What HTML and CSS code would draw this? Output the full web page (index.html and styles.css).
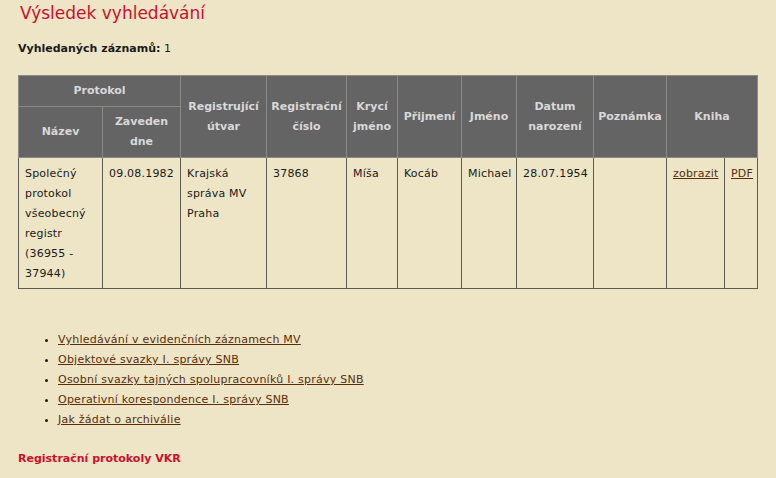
FILE: index.html
```html
<!DOCTYPE html>
<html lang="cs">
<head>
<meta charset="utf-8">
<title>Výsledek vyhledávání</title>
<link rel="stylesheet" href="styles.css">
</head>
<body>
<h1 class="title">Výsledek vyhledávání</h1>
<p class="count"><b>Vyhledaných záznamů:</b> 1</p>
<table class="results">
<colgroup>
<col style="width:84px"><col style="width:78px"><col style="width:86px"><col style="width:80px"><col style="width:51px"><col style="width:64px"><col style="width:55px"><col style="width:77px"><col style="width:73px"><col style="width:58px"><col style="width:33px">
</colgroup>
<thead>
<tr class="h1row">
<th colspan="2">Protokol</th>
<th rowspan="2">Registrující útvar</th>
<th rowspan="2">Registrační číslo</th>
<th rowspan="2">Krycí jméno</th>
<th rowspan="2">Přijmení</th>
<th rowspan="2">Jméno</th>
<th rowspan="2">Datum narození</th>
<th rowspan="2">Poznámka</th>
<th rowspan="2" colspan="2">Kniha</th>
</tr>
<tr class="h2row">
<th>Název</th>
<th>Zaveden dne</th>
</tr>
</thead>
<tbody>
<tr>
<td>Společný protokol všeobecný registr (36955 - 37944)</td>
<td>09.08.1982</td>
<td>Krajská správa MV Praha</td>
<td>37868</td>
<td>Míša</td>
<td>Kocáb</td>
<td>Michael</td>
<td>28.07.1954</td>
<td></td>
<td><a href="#">zobrazit</a></td>
<td><a href="#">PDF</a></td>
</tr>
</tbody>
</table>
<ul class="links">
<li><a href="#">Vyhledávání v evidenčních záznamech MV</a></li>
<li><a href="#">Objektové svazky I. správy SNB</a></li>
<li><a href="#">Osobní svazky tajných spolupracovníků I. správy SNB</a></li>
<li><a href="#">Operativní korespondence I. správy SNB</a></li>
<li><a href="#">Jak žádat o archiválie</a></li>
</ul>
<p class="vkr">Registrační protokoly VKR</p>
</body>
</html>
```

FILE: styles.css
```css
html, body {
  margin: 0;
  padding: 0;
  background: #ede5c5;
}
body {
  font-family: "DejaVu Sans", Verdana, sans-serif;
  font-size: 11px;
  color: #1a1a1a;
  padding: 0 18px;
}
.title {
  margin: 0;
  padding: 2px 0 0 2px;
  font-size: 17px;
  font-weight: normal;
  color: #c8102e;
  line-height: 22px;
}
.count {
  margin: 16px 0 0;
  line-height: 18px;
}
.results {
  margin-top: 17px;
  border-collapse: collapse;
  table-layout: fixed;
  width: 739px;
}
.results th {
  background: #646464;
  color: #d8d8d8;
  font-weight: bold;
  border: 1px solid #8a8a86;
  line-height: 20px;
  padding: 0 4px;
  text-align: center;
}
.results .h1row th { height: 30px; }
.results .h2row th { height: 50px; }
.results td {
  border: 1px solid #5e5b52;
  vertical-align: top;
  line-height: 20px;
  padding: 6px 4px 4px 6px;
  height: 120px;
  letter-spacing: 0.2px;
}
.results a {
  color: #5a2d0c;
}
.links {
  margin: 41px 0 0;
  padding-left: 40px;
  letter-spacing: 0.24px;
}
.links li {
  line-height: 20px;
}
.links a {
  color: #5a2d0c;
}
.vkr {
  margin: 20px 0 0;
  font-weight: bold;
  color: #c8102e;
  line-height: 18px;
}
```
